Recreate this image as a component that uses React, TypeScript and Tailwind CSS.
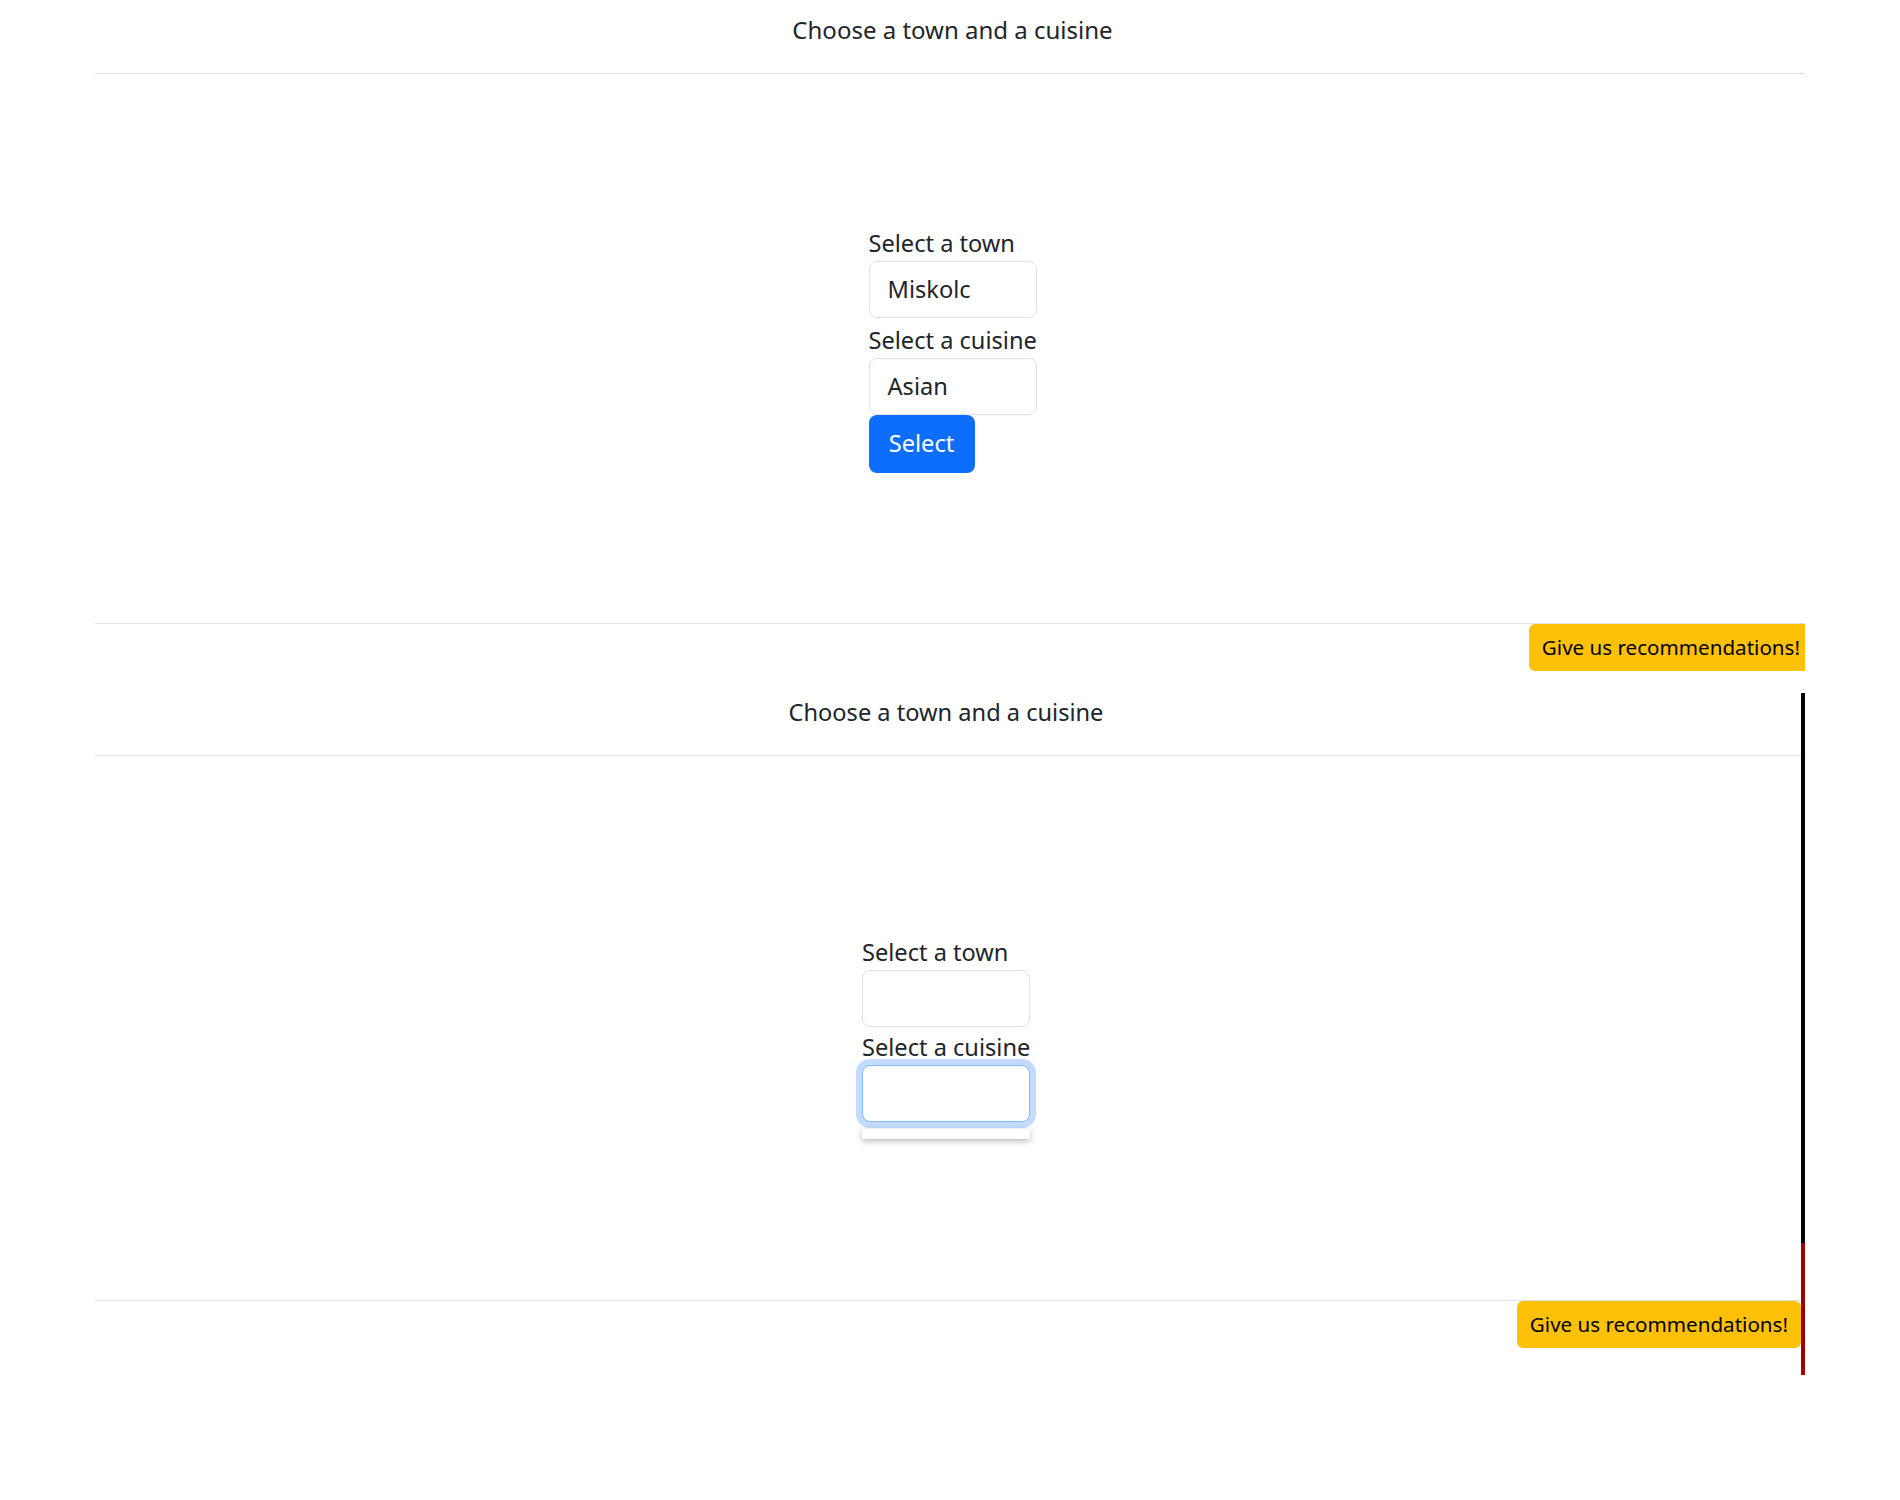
import { useState } from "react";

type PickerProps = {
  town: string;
  cuisine: string;
  gapClass: string;
  focusCuisine?: boolean;
  showSelect?: boolean;
};

function Picker({ town, cuisine, gapClass, focusCuisine, showSelect }: PickerProps) {
  return (
    <form className="flex w-[168px] flex-col" onSubmit={(event) => event.preventDefault()}>
      <label className="block h-[36px] text-[23.6px] leading-[36px] whitespace-nowrap">Select a town</label>
      <div className="flex h-[57px] w-[168px] items-center rounded-[8px] border border-[#dee2e6] bg-white px-[18px] pt-[2px] text-[23.6px]">
        {town}
      </div>
      <label className={`block h-[36px] text-[23.6px] leading-[36px] whitespace-nowrap ${gapClass}`}>Select a cuisine</label>
      <div className="relative">
        <div
          className={`flex h-[57px] w-[168px] items-center rounded-[8px] border bg-white px-[18px] pt-[2px] text-[23.6px] ${
            focusCuisine ? "border-[#86b7fe] shadow-[0_0_0_6px_rgba(13,110,253,0.25)]" : "border-[#dee2e6]"
          }`}
        >
          {cuisine}
        </div>
        {focusCuisine && (
          <div className="absolute left-0 top-[64px] h-[10px] w-[168px] bg-white shadow-[0_2px_6px_rgba(0,0,0,0.3)]" />
        )}
      </div>
      {showSelect && (
        <button
          type="submit"
          className="h-[58px] w-[106px] rounded-[8px] bg-[#0d6efd] pt-[1px] text-[23.6px] text-white"
        >
          Select
        </button>
      )}
    </form>
  );
}

function RecommendButton({ extraClass }: { extraClass: string }) {
  return (
    <button
      type="button"
      className={`h-[47px] shrink-0 rounded-[6px] bg-[#ffc107] px-[13px] text-[20.6px] leading-[31px] whitespace-nowrap text-black ${extraClass}`}
    >
      Give us recommendations!
    </button>
  );
}

export default function App() {
  const [town] = useState("Miskolc");
  const [cuisine] = useState("Asian");

  return (
    <div className="min-h-[1500px] bg-white font-['Noto_Sans',sans-serif] text-[#212529]">
      {/* filled-in card */}
      <section className="mx-[95px] overflow-hidden">
        <div className="h-[74px] border-b border-[#dfe0e1] pl-[5px] pt-[12px] text-center text-[24px] leading-[36px]">
          Choose a town and a cuisine
        </div>
        <div className="flex h-[549px] items-center justify-center pl-[5px]">
          <Picker town={town} cuisine={cuisine} gapClass="mt-[4px]" showSelect />
        </div>
        <div className="flex justify-end border-t border-[#dfe0e1]">
          <RecommendButton extraClass="-mr-[8px]" />
        </div>
      </section>

      {/* empty card, cuisine focused */}
      <div className="mx-[95px] mt-[13px] flex">
        <section className="min-w-0 flex-1">
          <div className="h-[72px] border-b border-[#dfe0e1] pr-[4px] pt-[10px] text-center text-[23.6px] leading-[36px]">
            Choose a town and a cuisine
          </div>
          <div className="flex h-[544px] items-center justify-center pr-[4px]">
            <Picker town="" cuisine="" gapClass="mt-[2px]" focusCuisine />
          </div>
          <div className="flex justify-end border-t border-[#dfe0e1]">
            <RecommendButton extraClass="" />
          </div>
        </section>
        <div className="mt-[9px] flex w-[4px] flex-col">
          <div className="h-[550px] bg-black" />
          <div className="h-[132px] bg-[#a00000]" />
        </div>
      </div>
    </div>
  );
}
